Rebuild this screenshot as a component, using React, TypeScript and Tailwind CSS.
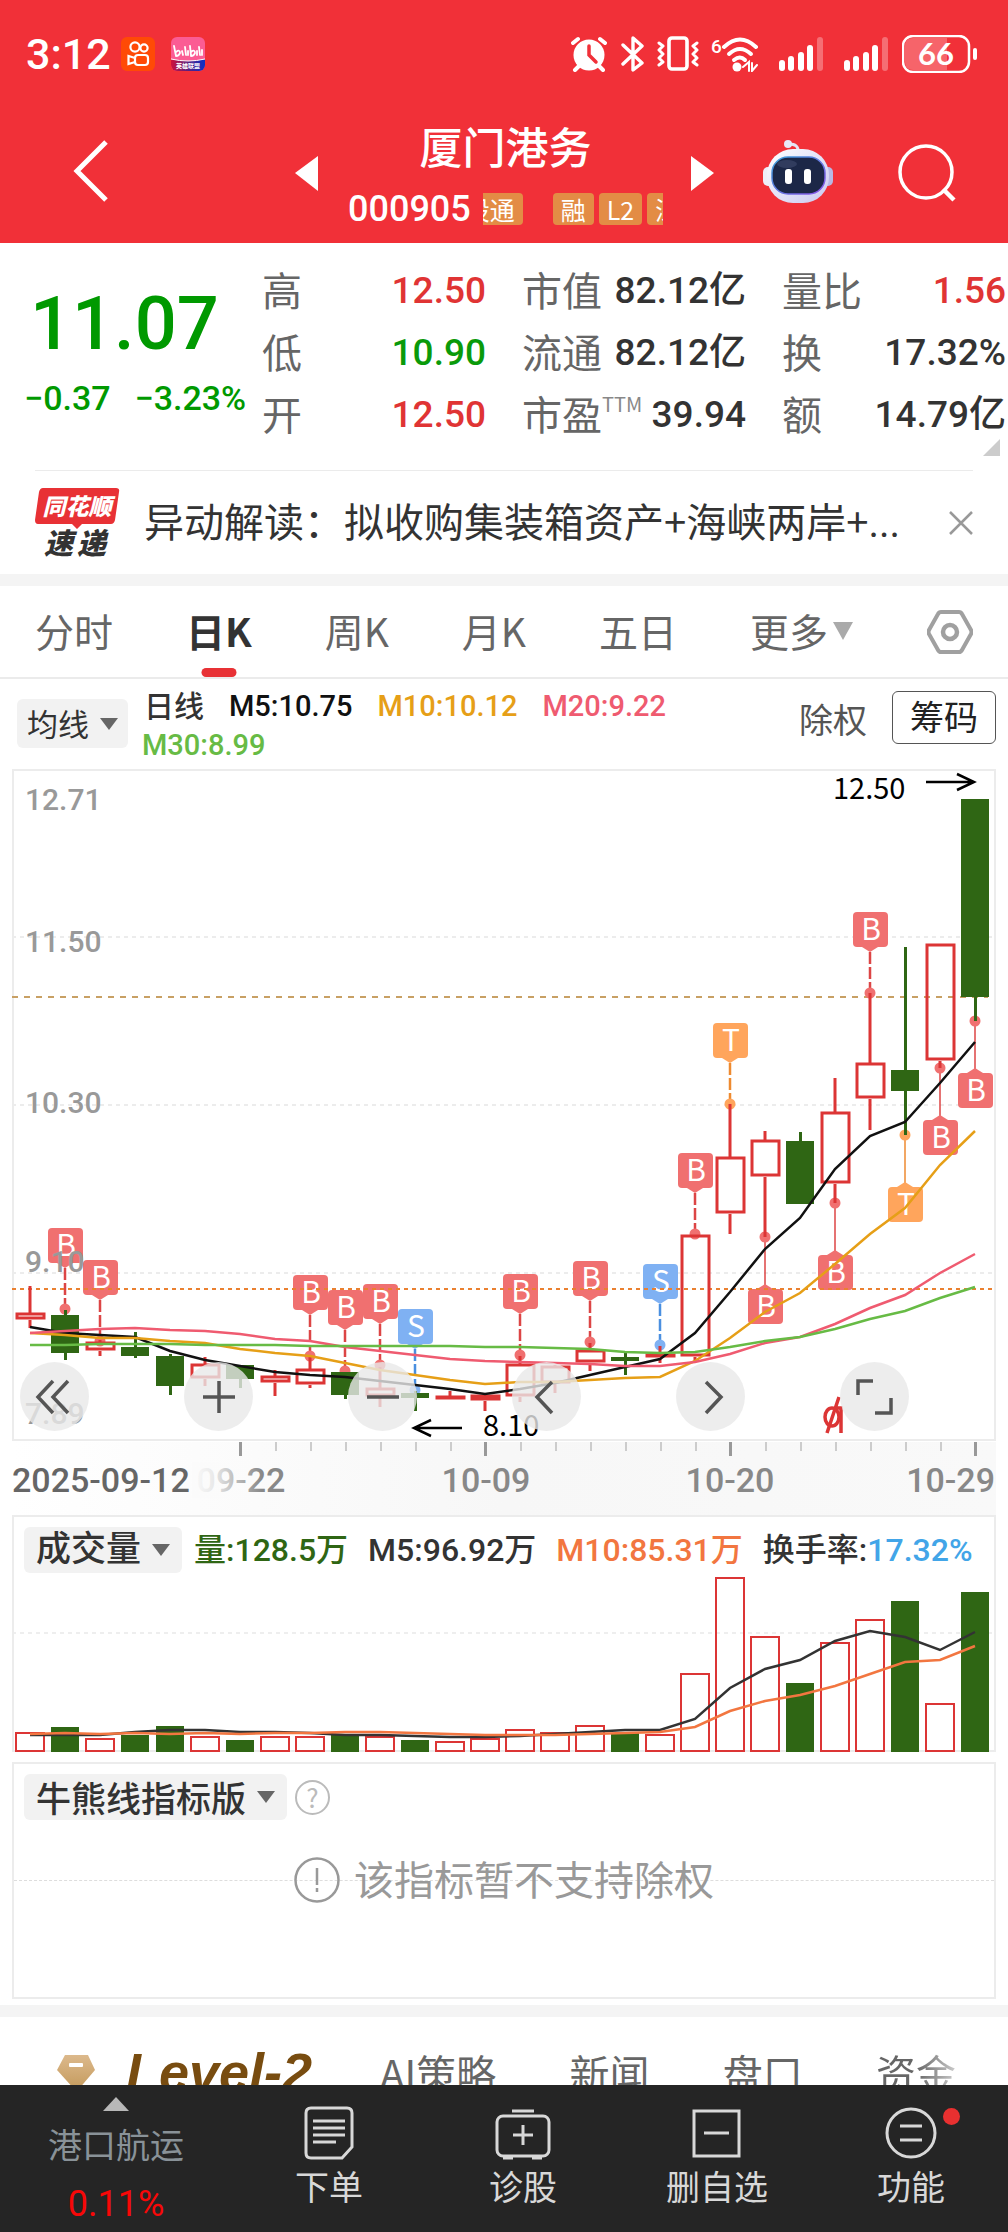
import React, { useState } from 'react';

type Candle = [color: 'r' | 'g', high: number, top: number, bottom: number, low: number];

interface Marker {
  at: number;
  y: number;
  kind: 'B' | 'S' | 'T';
  below?: boolean;
}

const STEP = 35;
const FIRST_X = 18;
const RED = '#dc3535';
const GREEN = '#2f6614';

const candles: Candle[] = [
  ['r', 517, 544, 551, 559],
  ['g', 541, 546, 584, 591],
  ['r', 571, 573, 582, 587],
  ['g', 563, 578, 587, 589],
  ['g', 585, 587, 617, 626],
  ['r', 588, 595, 610, 617],
  ['g', 596, 596, 610, 619],
  ['r', 601, 607, 614, 627],
  ['r', 588, 600, 616, 619],
  ['g', 603, 603, 626, 630],
  ['r', 598, 619, 628, 638],
  ['g', 622, 624, 629, 642],
  ['r', 622, 627, 631, 631],
  ['r', 624, 626, 632, 642],
  ['r', 587, 595, 628, 633],
  ['r', 596, 597, 615, 624],
  ['r', 574, 581, 594, 602],
  ['g', 584, 588, 592, 606],
  ['r', 577, 585, 589, 594],
  ['r', 466, 466, 588, 592],
  ['r', 335, 388, 445, 465],
  ['r', 362, 371, 408, 468],
  ['g', 363, 372, 435, 435],
  ['r', 309, 343, 415, 434],
  ['r', 224, 294, 330, 361],
  ['g', 178, 301, 322, 366],
  ['r', 175, 175, 292, 299],
  ['g', 30, 30, 228, 252],
];

const priceLines = [
  { color: '#111111', ys: [558, 564, 566, 568, 582, 591, 597, 603, 606, 608, 612, 616, 620, 625, 620, 614, 606, 598, 590, 564, 523, 480, 449, 400, 367, 353, 314, 273] },
  { color: '#e69f17', ys: [564, 566, 569, 569, 572, 574, 580, 584, 587, 594, 601, 606, 611, 615, 613, 613, 611, 609, 608, 592, 569, 543, 524, 495, 465, 439, 396, 362] },
  { color: '#ef5b70', ys: [564, 562, 560, 559, 561, 562, 565, 570, 572, 578, 582, 586, 590, 592, 593, 594, 595, 597, 597, 593, 585, 574, 568, 555, 539, 526, 504, 485] },
  { color: '#67bb45', ys: [576, 576, 575, 575, 575, 576, 576, 576, 577, 577, 577, 577, 577, 578, 578, 579, 580, 583, 584, 583, 578, 572, 568, 560, 550, 542, 529, 518] },
];

const markers: Marker[] = [
  { at: 1, y: 540, kind: 'B' },
  { at: 2, y: 572, kind: 'B' },
  { at: 8, y: 587, kind: 'B' },
  { at: 9, y: 602, kind: 'B' },
  { at: 10, y: 596, kind: 'B' },
  { at: 11, y: 621, kind: 'S' },
  { at: 14, y: 586, kind: 'B' },
  { at: 16, y: 573, kind: 'B' },
  { at: 18, y: 576, kind: 'S' },
  { at: 19, y: 465, kind: 'B' },
  { at: 20, y: 335, kind: 'T' },
  { at: 24, y: 224, kind: 'B' },
  { at: 21, y: 468, kind: 'B', below: true },
  { at: 23, y: 434, kind: 'B', below: true },
  { at: 25, y: 366, kind: 'T', below: true },
  { at: 26, y: 299, kind: 'B', below: true },
  { at: 27, y: 252, kind: 'B', below: true },
];

const markerColors = {
  B: { box: '#f07070', line: '#dc4545' },
  S: { box: '#7fb1f3', line: '#4a8fe0' },
  T: { box: '#ffa55c', line: '#ee8a30' },
};

const volumeTops = [157, 152, 163, 160, 151, 161, 165, 161, 161, 160, 161, 165, 166, 163, 154, 157, 150, 158, 159, 98, 2, 61, 108, 67, 44, 26, 128, 17];

const volumeLines = [
  { color: '#333333', ys: [160, 160, 160, 157, 155, 155, 157, 157, 158, 160, 160, 161, 162, 162, 161, 159, 157, 155, 155, 144, 113, 94, 85, 66, 56, 62, 75, 57] },
  { color: '#f27640', ys: [159, 158, 159, 158, 159, 158, 159, 158, 158, 157, 157, 158, 159, 160, 160, 160, 159, 158, 157, 152, 136, 126, 120, 111, 99, 87, 85, 71] },
];

const tabs = ['分时', '日K', '周K', '月K', '五日'];

const quoteColumns = [
  [
    { label: '高', value: '12.50', color: 'text-[#e03434]' },
    { label: '低', value: '10.90', color: 'text-[#0a9a0a]' },
    { label: '开', value: '12.50', color: 'text-[#e03434]' },
  ],
  [
    { label: '市值', value: '82.12亿', color: 'text-[#333333]' },
    { label: '流通', value: '82.12亿', color: 'text-[#333333]' },
    { label: '市盈', sup: 'TTM', value: '39.94', color: 'text-[#333333]' },
  ],
  [
    { label: '量比', value: '1.56', color: 'text-[#e03434]' },
    { label: '换', value: '17.32%', color: 'text-[#333333]' },
    { label: '额', value: '14.79亿', color: 'text-[#333333]' },
  ],
];

const NUM = "font-[Roboto,'Noto_Sans_CJK_SC',sans-serif]";

const xOf = (i: number) => FIRST_X + i * STEP;
const toPoints = (ys: number[]) => ys.map((y, i) => `${xOf(i)},${y}`).join(' ');

function SignalIcon() {
  return (
    <svg className="h-9 w-11" viewBox="0 0 44 36" fill="#fff">
      <rect x="0" y="24" width="6" height="11" rx="3" />
      <rect x="9" y="20" width="6" height="15" rx="3" />
      <rect x="19" y="16" width="6" height="19" rx="3" />
      <rect x="28" y="9" width="6" height="26" rx="3" />
      <rect x="38" y="1" width="6" height="34" rx="3" opacity="0.3" />
    </svg>
  );
}

function StatusBar() {
  return (
    <div className="flex h-[108px] items-center pl-[26px] pr-[30px] text-white">
      <span className="font-[Roboto,sans-serif] text-[43px] leading-none font-medium">3:12</span>
      <svg className="ml-[10px] size-[34px]" viewBox="0 0 34 34">
        <rect width="34" height="34" rx="6" fill="#ff4a06" />
        <g fill="none" stroke="#fff" strokeWidth="2.2">
          <circle cx="14" cy="10" r="4.6" />
          <circle cx="23" cy="11" r="3.6" />
          <rect x="14" y="18" width="13" height="10" rx="3" />
          <path d="M14 21 L7.500 19 V27 L14 25" />
        </g>
      </svg>
      <svg className="ml-4 size-[34px]" viewBox="0 0 34 34">
        <defs>
          <clipPath id="bili">
            <rect width="34" height="34" rx="6" />
          </clipPath>
          <linearGradient id="biliStrip" x1="0" x2="1">
            <stop offset="0" stopColor="#d0103a" />
            <stop offset="0.5" stopColor="#5a2080" />
            <stop offset="1" stopColor="#0a30c8" />
          </linearGradient>
        </defs>
        <g clipPath="url(#bili)">
          <rect width="34" height="34" fill="#fb5c94" />
          <path d="M0 22 Q17 26 34 22 V34 H0 Z" fill="url(#biliStrip)" />
          <path d="M0 22 Q17 26 34 22" fill="none" stroke="#fff" />
        </g>
        <g fill="none" stroke="#fff" strokeWidth="1.800" strokeLinecap="round">
          <path d="M3 9 L5 19 M5 15 Q9 12 9 16 Q8 19 5 19 M11 14 L12 18 M14 10 L15 18 M17 14 L17 18" />
          <path d="M19 9 L20 19 M20 15 Q24 12 24 16 Q23 19 20 19 M26 14 L26 18 M28 10 L29 18 M31 13 L31 18" />
        </g>
        <text x="17" y="31" textAnchor="middle" fontSize="6" fontWeight="700" fill="#fff">英雄联盟</text>
      </svg>

      <div className="ml-auto flex items-center">
        <svg className="h-9 w-9" viewBox="0 0 36 36">
          <circle cx="18" cy="19" r="15.500" fill="#fff" />
          <g stroke="#fff" strokeWidth="4" strokeLinecap="round">
            <path d="M2 7 L7 3 M34 7 L29 3 M8 30 L4 34 M28 30 L32 34" />
          </g>
          <path d="M18 10 V19 L25 26" fill="none" stroke="#f13038" strokeWidth="3.500" strokeLinecap="round" />
        </svg>
        <svg className="ml-[14px] h-9 w-6" viewBox="0 0 24 36" fill="none" stroke="#fff" strokeWidth="3.400" strokeLinejoin="round" strokeLinecap="round">
          <path d="M2 9 L21 27 L12 34 V2 L21 10 L2 28" />
        </svg>
        <svg className="ml-3 h-9 w-[42px]" viewBox="0 0 42 36" fill="none" stroke="#fff" strokeWidth="3.600" strokeLinejoin="round" strokeLinecap="round">
          <rect x="12" y="2" width="18" height="31" rx="3" />
          <path d="M2 7 L6 10 L2 14 L6 18 L2 22 L6 26 L2 29 M40 7 L36 10 L40 14 L36 18 L40 22 L36 26 L40 29" strokeWidth="3" />
        </svg>
        <svg className="ml-3 h-9 w-12" viewBox="0 0 48 36" fill="none" stroke="#fff" strokeWidth="4" strokeLinecap="round">
          <text x="0" y="17" fontSize="19" fontFamily="Roboto" fontWeight="500" fill="#fff" stroke="none">6</text>
          <path d="M13 11 Q29 -4 45 11" />
          <path d="M18 18 Q29 8 40 18" />
          <path d="M23 24 Q29 19 34 24" />
          <circle cx="26" cy="31" r="4.500" fill="#fff" stroke="none" />
          <path d="M32 31 L38 26 V35 M41 27 V35 L46 29" strokeWidth="2" />
        </svg>
        <span className="ml-5"><SignalIcon /></span>
        <span className="ml-[21px]"><SignalIcon /></span>
        <svg className="ml-[14px] h-[38px] w-[76px]" viewBox="0 0 76 38">
          <rect x="1" y="1" width="66" height="36" rx="10" fill="#f13038" stroke="#fff" strokeWidth="2.500" />
          <path d="M11 3 H45 V35 H11 Q3 35 3 27 V11 Q3 3 11 3 Z" fill="#f6646a" />
          <rect x="71" y="13" width="4" height="12" rx="2" fill="#fff" />
          <text x="34" y="30" textAnchor="middle" fontSize="31" fontWeight="700" fill="#fff" className="font-[Lato,sans-serif]">66</text>
        </svg>
      </div>
    </div>
  );
}

function RobotIcon() {
  return (
    <svg className="h-16 w-[70px]" viewBox="0 0 70 64">
      <defs>
        <linearGradient id="shell" x1="0" y1="0" x2="1" y2="1">
          <stop offset="0" stopColor="#ffffff" />
          <stop offset="1" stopColor="#c9c8f0" />
        </linearGradient>
        <linearGradient id="rim" x1="0" y1="0" x2="1" y2="1">
          <stop offset="0" stopColor="#3aa0d8" />
          <stop offset="1" stopColor="#8a50e8" />
        </linearGradient>
      </defs>
      <path d="M26 4 Q36 4 35 12" fill="none" stroke="#e4e4f4" strokeWidth="3" />
      <circle cx="25" cy="4" r="4" fill="#e8e8f8" />
      <rect x="0" y="27" width="12" height="19" rx="5" fill="#eeeef8" />
      <rect x="58" y="27" width="12" height="19" rx="5" fill="#b8b8e4" />
      <rect x="4" y="9" width="62" height="54" rx="26" fill="url(#shell)" />
      <rect x="9" y="17" width="53" height="37" rx="16" fill="#1c2747" stroke="url(#rim)" strokeWidth="1.500" />
      <ellipse cx="24" cy="24" rx="10" ry="4" fill="#3b4668" opacity="0.7" />
      <rect x="22" y="29" width="7" height="15" rx="3" fill="#fff" />
      <rect x="41" y="29" width="7" height="15" rx="3" fill="#fff" />
    </svg>
  );
}

function TitleBar() {
  return (
    <div className="flex h-[135px] items-start pl-[72px] pr-[52px] text-white">
      <button type="button" aria-label="返回" className="mt-8">
        <svg className="h-[62px] w-9" viewBox="0 0 36 62" fill="none" stroke="#fff" strokeWidth="5">
          <path d="M34 2 L5 31 L34 60" />
        </svg>
      </button>
      <button type="button" aria-label="上一只" className="mt-12 ml-auto">
        <svg className="h-9 w-6" viewBox="0 0 24 36" fill="#fff"><path d="M24 0 V35 L1 17 Z" /></svg>
      </button>
      <div className="mt-[13px] ml-[30px] flex w-[315px] flex-col items-center">
        <h1 className="text-[43px] leading-[48px] font-medium">厦门港务</h1>
        <div className="mt-6 flex w-full items-center">
          <span className={`${NUM} text-[36px] leading-8 font-medium`}>000905</span>
          <div className="ml-3 flex flex-1 items-center gap-[5px] overflow-hidden text-[25px] leading-8">
            <span className="mr-[25px] flex w-10 shrink-0 justify-end overflow-hidden rounded-r-sm bg-[#e38c45] pr-2">
              <span className="shrink-0">股通</span>
            </span>
            <span className="shrink-0 rounded-sm bg-[#e38c45] px-2">融</span>
            <span className="shrink-0 rounded-sm bg-[#e38c45] px-2">L2</span>
            <span className="shrink-0 rounded-sm bg-[#e38c45] px-2">深</span>
          </div>
        </div>
      </div>
      <button type="button" aria-label="下一只" className="mt-12 ml-7">
        <svg className="h-9 w-6" viewBox="0 0 24 36" fill="#fff"><path d="M0 0 V35 L23 17 Z" /></svg>
      </button>
      <button type="button" aria-label="智能助手" className="mt-8 ml-12">
        <RobotIcon />
      </button>
      <button type="button" aria-label="搜索" className="mt-9 ml-[65px]">
        <svg className="size-[58px]" viewBox="0 0 58 58" fill="none" stroke="#fff" strokeWidth="3.500">
          <circle cx="28" cy="28" r="26" />
          <path d="M45 45 L56 56" strokeWidth="4.500" />
        </svg>
      </button>
    </div>
  );
}

function QuotePanel() {
  return (
    <section className="relative flex h-[227px] pt-[17px]">
      <div className={`${NUM} w-[262px] pl-6 font-medium whitespace-nowrap text-[#009900]`}>
        <div className="pt-5 pl-[6px] text-[74px] leading-[88px]">11.07</div>
        <div className="mt-2 flex gap-6 text-[34px] leading-[44px]">
          <span>−0.37</span>
          <span>−3.23%</span>
        </div>
      </div>
      <div className="grid flex-1 grid-cols-3 gap-x-9 pr-[2px]">
        {quoteColumns.map((column, c) => (
          <dl key={c}>
            {column.map(row => (
              <div key={row.label} className="flex h-[62px] items-center justify-between whitespace-nowrap">
                <dt className="flex pb-[5px] text-[40px] leading-[58px] text-[#666666]">
                  {row.label}
                  {row.sup && <sup className="top-0 pt-2 text-[20px] leading-6 text-[#888888]">{row.sup}</sup>}
                </dt>
                <dd className={`${NUM} ${row.color} text-[37px] leading-[62px] font-medium`}>{row.value}</dd>
              </div>
            ))}
          </dl>
        ))}
      </div>
      <svg className="absolute right-2 bottom-[14px] size-[17px]" viewBox="0 0 17 17">
        <path d="M17 0 V17 H0 Z" fill="#cccccc" />
      </svg>
    </section>
  );
}

function NewsBar() {
  return (
    <section className="mx-[35px] flex h-[104px] items-center border-t border-[#ebebeb]">
      <svg className="h-[70px] w-[85px] shrink-0" viewBox="0 0 85 70">
        <path d="M8 0 H81 Q85 0 84 4 L80 32 Q79 36 76 36 H47 L42 41 L37 36 H3 Q0 36 0 32 L4 4 Q5 0 8 0 Z" fill="#e83135" />
        <g fontWeight="900" fontStyle="italic">
          <text x="42" y="27" textAnchor="middle" fontSize="23" fill="#fff">同花顺</text>
          <text x="9" y="66" fontSize="29" fill="#333">速</text>
          <text x="42" y="66" fontSize="29" fill="#333">递</text>
        </g>
      </svg>
      <a href="#news" className="ml-6 flex-1 pb-[2px] text-[40px] leading-[60px] whitespace-nowrap text-[#333333]">
        异动解读：拟收购集装箱资产+海峡两岸+<span className="font-[Roboto,sans-serif]">...</span>
      </a>
      <button type="button" aria-label="关闭">
        <svg className="size-6" viewBox="0 0 24 24" stroke="#999" strokeWidth="2.500"><path d="M1 1 L23 23 M23 1 L1 23" /></svg>
      </button>
    </section>
  );
}

function PeriodTabs() {
  const [active, setActive] = useState('日K');

  return (
    <nav className="flex h-[93px] items-center justify-between border-b-2 border-[#ebebeb] px-[35px] text-[39px] text-[#666666]">
      {tabs.map(tab => (
        <button
          key={tab}
          type="button"
          onClick={() => setActive(tab)}
          className={`relative h-full pb-[2px] ${tab === active ? 'font-bold text-[#333333]' : ''}`}
        >
          {tab}
          {tab === active && <span className="absolute bottom-0 left-1/2 h-[9px] w-[35px] -translate-x-1/2 rounded-full bg-[#e83135]" />}
        </button>
      ))}
      <button type="button" className="flex items-center gap-1 pb-[2px]">
        更多
        <svg className="h-[18px] w-[22px]" viewBox="0 0 22 18"><path d="M1 0 H21 L11 18 Z" fill="#aaa" /></svg>
      </button>
      <button type="button" aria-label="设置">
        <svg className="h-11 w-[46px]" viewBox="0 0 46 44" fill="none" stroke="#a0a0a0" strokeWidth="4" strokeLinejoin="round">
          <path d="M14 2 H32 Q34 2 35 4 L44 20 Q45 22 44 24 L35 40 Q34 42 32 42 H14 Q12 42 11 40 L2 24 Q1 22 2 20 L11 4 Q12 2 14 2 Z" />
          <circle cx="23" cy="22" r="7" strokeWidth="4.500" />
        </svg>
      </button>
    </nav>
  );
}

function CaretDown() {
  return (
    <svg className="h-3 w-[18px]" viewBox="0 0 18 12"><path d="M0 0 H18 L9 12 Z" fill="#666" /></svg>
  );
}

function AverageBar() {
  return (
    <div className="flex h-[90px] items-start pl-[17px] pr-3">
      <button type="button" className="mt-5 flex h-[49px] w-[111px] shrink-0 items-center justify-center gap-[11px] rounded-md bg-[#f2f2f2] text-[31px] text-[#333333]">
        均线
        <CaretDown />
      </button>
      <div className={`${NUM} mt-2 ml-[14px] flex flex-1 flex-wrap gap-x-[25px] text-[29px] leading-[39px] font-medium`}>
        <span className="pl-[2px] text-[30px] text-[#333333]">日线</span>
        <span className="text-[#111111]">M5:10.75</span>
        <span className="text-[#e69f17]">M10:10.12</span>
        <span className="text-[#ef5b70]">M20:9.22</span>
        <span className="text-[#67bb45]">M30:8.99</span>
      </div>
      <button type="button" className="mt-4 text-[34px] leading-[48px] text-[#555555]">除权</button>
      <button type="button" className="mt-3 ml-[25px] h-[53px] w-[104px] rounded-md border border-[#555555] pb-1 text-[34px] leading-[46px] text-[#222222]">筹码</button>
    </div>
  );
}

function MarkerShape({ at, y, kind, below }: Marker) {
  const x = xOf(at);
  const { box, line } = markerColors[kind];
  const boxTop = below ? y + 52 : y - 81;

  return (
    <g>
      {below ? (
        <path d={`M${x} ${y} V${boxTop - 3}`} stroke={line} strokeWidth="1.500" />
      ) : (
        <path d={`M${x} ${boxTop + 40} V${y}`} stroke={line} strokeWidth="2.500" strokeDasharray="12 3" />
      )}
      <circle cx={x} cy={y} r="5.500" fill={box} />
      <rect x={x - 17} y={boxTop} width="35" height="35" rx="4" fill={box} />
      {below ? (
        <path d={`M${x - 8} ${boxTop} L${x} ${boxTop - 5} L${x + 8} ${boxTop} Z`} fill={box} />
      ) : (
        <path d={`M${x - 8} ${boxTop + 35} L${x} ${boxTop + 40} L${x + 8} ${boxTop + 35} Z`} fill={box} />
      )}
      <text x={x + 1} y={boxTop + 28} textAnchor="middle" fontSize="30" fill="#fff">{kind}</text>
    </g>
  );
}

const roundButtons = [
  { label: '最左', d: 'M33 19 L18 35 L33 51 M48 19 L33 35 L48 51' },
  { label: '放大', d: 'M19 35 H51 M35 19 V51' },
  { label: '缩小', d: 'M19 35 H51' },
  { label: '左移', d: 'M40 20 L25 35 L40 51' },
  { label: '右移', d: 'M30 20 L45 35 L30 51' },
  { label: '全屏', d: 'M18 33 V19 H33 M51 36 V51 H35' },
];

function PriceChart() {
  return (
    <div className="relative mx-3">
      <svg className="block w-full" viewBox="0 0 984 673">
        <rect x="1" y="1" width="982" height="670" fill="none" stroke="#ececec" strokeWidth="2" />
        <g stroke="#ececec" strokeWidth="2" strokeDasharray="4 4">
          <path d="M0 168 H980 M0 336 H980 M0 504 H980" />
        </g>
        <path d="M0 228 H976" stroke="#c8a064" strokeWidth="2" strokeDasharray="6 6" />

        {markers.map(m => <MarkerShape key={m.at} {...m} />)}

        <path d="M0 520 H980" stroke="#ea8030" strokeWidth="2" strokeDasharray="4 4" />

        {candles.map(([color, high, top, bottom, low], i) => {
          const x = xOf(i);
          return color === 'g' ? (
            <g key={i} fill={GREEN}>
              <rect x={x - 1} y={high} width="3" height={low - high} />
              <rect x={x - 14} y={top} width="28" height={Math.max(bottom - top, 3)} />
            </g>
          ) : (
            <g key={i} fill="none" stroke={RED} strokeWidth="3">
              <path d={`M${x} ${high} V${top} M${x} ${bottom} V${low}`} />
              <rect x={x - 13} y={top + 1} width="27" height={Math.max(bottom - top - 3, 1)} />
            </g>
          );
        })}

        {priceLines.map(line => (
          <polyline key={line.color} points={toPoints(line.ys)} fill="none" stroke={line.color} strokeWidth="2.500" />
        ))}

        <g className={NUM} fontSize="30" fontWeight="500" fill="#999">
          <text x="13" y="41">12.71</text>
          <text x="13" y="183">11.50</text>
          <text x="13" y="344">10.30</text>
          <text x="13" y="503">9.10</text>
          <text x="13" y="655">7.89</text>
        </g>
        <g fontSize="29" fill="#000">
          <text x="821" y="30">12.50</text>
          <text x="471" y="667">8.10</text>
        </g>
        <g fill="none" stroke="#000" strokeWidth="2.500">
          <path d="M914 13 H962 M945 5 L962 13 L945 21" />
          <path d="M450 659 H402 M419 651 L402 659 L419 667" />
        </g>
        <g fill="none" stroke={RED} strokeWidth="3.500">
          <ellipse cx="820" cy="648" rx="7" ry="9" />
          <path d="M823 639 H829 V664 M827 628 L815 664" />
        </g>
      </svg>
      <div className="absolute inset-x-0 bottom-[11px] flex justify-between pr-[87px] pl-2">
        {roundButtons.map(b => (
          <button key={b.label} type="button" aria-label={b.label} className="size-[69px] rounded-full bg-[#e8e8e8]/80">
            <svg className="size-full" viewBox="0 0 69 69" fill="none" stroke="#555" strokeWidth="3.500"><path d={b.d} /></svg>
          </button>
        ))}
      </div>
    </div>
  );
}

function DateAxis() {
  const ticks = Array.from({ length: 22 }, (_, k) => k + 6);

  return (
    <div className="mx-3 bg-linear-to-r from-white via-[#f7f7f7] to-[#f9f9f9]">
      <svg className="block w-full" viewBox="0 0 984 73">
        <defs>
          <linearGradient id="axisFade" x1="0" x2="1">
            <stop offset="0" stopColor="#fbfbfb" />
            <stop offset="0.3" stopColor="#fbfbfb" stopOpacity="0.85" />
            <stop offset="1" stopColor="#fbfbfb" stopOpacity="0" />
          </linearGradient>
        </defs>
        {ticks.map(i => (
          i % 7 === 6
            ? <rect key={i} x={xOf(i) - 1} y="0" width="3" height="14" fill="#999" />
            : <rect key={i} x={xOf(i)} y="0" width="2" height="9" fill="#ccc" />
        ))}
        <g className={NUM} fontSize="34" fontWeight="500" fill="#888">
          <text x="229" y="50" textAnchor="middle">09-22</text>
          <rect x="180" y="20" width="70" height="36" fill="url(#axisFade)" />
          <text x="474" y="50" textAnchor="middle">10-09</text>
          <text x="718" y="50" textAnchor="middle">10-20</text>
          <text x="983" y="50" textAnchor="end">10-29</text>
          <text x="0" y="50" fill="#666">2025-09-12</text>
        </g>
      </svg>
    </div>
  );
}

function VolumePanel() {
  return (
    <section className="mx-3 border-2 border-b-0 border-[#ececec]">
      <div className={`${NUM} flex items-center gap-5 pt-[10px] pb-[2px] pl-[10px] text-[32px] leading-[46px] font-medium whitespace-nowrap`}>
        <button type="button" className="-mr-2 flex h-[46px] w-[158px] shrink-0 items-center justify-center gap-[11px] rounded-md bg-[#f2f2f2] text-[35px] text-[#333333]">
          成交量
          <CaretDown />
        </button>
        <span className="text-[#2f6614]">量:128.5万</span>
        <span className="text-[#333333]">M5:96.92万</span>
        <span className="text-[#f27640]">M10:85.31万</span>
        <span className="text-[#333333]">换手率:<span className="text-[#42a5e8]">17.32%</span></span>
      </div>
      <svg className="block w-full" viewBox="2 0 980 177">
        <path d="M0 58 H980" stroke="#ddd" strokeWidth="1" strokeDasharray="4 4" />
        <path d="M0 176 H984" stroke="#ececec" strokeWidth="2" />
        {volumeTops.map((top, i) => (
          candles[i][0] === 'g'
            ? <rect key={i} x={xOf(i) - 14} y={top} width="28" height={177 - top} fill={GREEN} />
            : <rect key={i} x={xOf(i) - 14} y={top + 1} width="28" height={175 - top} fill="none" stroke={RED} strokeWidth="2" />
        ))}
        {volumeLines.map(line => (
          <polyline key={line.color} points={toPoints(line.ys)} fill="none" stroke={line.color} strokeWidth="2.500" />
        ))}
      </svg>
    </section>
  );
}

function IndicatorPanel() {
  return (
    <section className="mx-3 mt-[10px] h-[237px] border-2 border-[#ececec] pt-[10px] pl-[10px]">
      <div className="flex items-center gap-2">
        <button type="button" className="flex h-[46px] w-[263px] items-center justify-center gap-[11px] rounded-md bg-[#f2f2f2] text-[35px] font-medium text-[#333333]">
          牛熊线指标版
          <CaretDown />
        </button>
        <button type="button" aria-label="说明" className="size-[35px] rounded-full border-2 border-[#bbbbbb] text-[26px] leading-[30px] text-[#bbbbbb]">?</button>
      </div>
      <div className="relative mt-[30px] -ml-[10px] flex h-[60px] items-center justify-center">
        <div className="absolute inset-x-0 top-1/2 border-t border-dashed border-[#dddddd]" />
        <svg className="relative size-[46px]" viewBox="0 0 46 46" fill="none" stroke="#999" strokeWidth="2.500">
          <circle cx="23" cy="23" r="21.500" />
          <path d="M23 11 V28 M23 31 V35" />
        </svg>
        <p className="relative ml-[14px] pb-1 text-[40px] leading-[56px] text-[#999999]">该指标暂不支持除权</p>
      </div>
    </section>
  );
}

function FeatureTabs() {
  return (
    <nav className="flex h-[100px] items-start pt-[25px] pr-[52px] pl-14 text-[40px] leading-[60px] whitespace-nowrap text-[#666666]">
      <a href="#level2" className="flex items-center text-[#784c10]">
        <svg className="h-[38px] w-10" viewBox="0 0 40 38">
          <defs>
            <linearGradient id="gem" x1="0" x2="0" y1="0" y2="1">
              <stop offset="0" stopColor="#dcb98c" />
              <stop offset="1" stopColor="#c49a5c" />
            </linearGradient>
          </defs>
          <path d="M9 2 H32 L39 17 L22 37 H19 L1 17 Z" fill="url(#gem)" />
          <rect x="13" y="10" width="14" height="4" rx="1" fill="#fff" />
        </svg>
        <span className="ml-[30px] font-['Liberation_Sans',Arial,sans-serif] text-[54px] font-bold italic">Level-2</span>
      </a>
      <div className="ml-[68px] flex flex-1 justify-between">
        <a href="#ai">AI策略</a>
        <a href="#stock-news">新闻</a>
        <a href="#orders">盘口</a>
        <a href="#funds" className="bg-linear-to-r from-[#666666] from-50% to-[#cccccc] bg-clip-text text-transparent">资金</a>
      </div>
    </nav>
  );
}

function BottomBar() {
  return (
    <footer className="fixed inset-x-0 bottom-0 flex h-[147px] bg-[#252525] text-[34px] leading-[44px] text-[#d8d8d8]">
      <button type="button" className="flex w-[232px] flex-col items-center pt-3 text-[#899298]">
        <svg className="h-[14px] w-[26px]" viewBox="0 0 26 14"><path d="M13 0 L26 14 H0 Z" fill="#b8b8b8" /></svg>
        <span className="mt-[11px]">港口航运</span>
        <span className={`${NUM} mt-4 text-[36px] text-[#f80808]`}>0.11%</span>
      </button>
      <div className="grid flex-1 grid-cols-4">
        <button type="button" className="flex flex-col items-center pt-[21px]">
          <svg className="size-[54px]" viewBox="0 0 54 54" fill="none" stroke="#d8d8d8" strokeWidth="3">
            <path d="M9 2 H45 Q50 2 50 7 V41 L40 52 H9 Q4 52 4 47 V7 Q4 2 9 2 Z" />
            <path d="M11 15 H43 M11 22 H43 M11 29 H43 M11 36 H34" />
          </svg>
          <span className="mt-1">下单</span>
        </button>
        <button type="button" className="flex flex-col items-center pt-[21px]">
          <svg className="h-[54px] w-[56px]" viewBox="0 0 56 54" fill="none" stroke="#d8d8d8" strokeWidth="3">
            <rect x="2" y="10" width="52" height="40" rx="6" />
            <path d="M17 5 H39 M18 29 H38 M28 19 V39" />
            <path d="M8 52 H18 M37 52 H47" />
          </svg>
          <span className="mt-1">诊股</span>
        </button>
        <button type="button" className="flex flex-col items-center pt-[21px]">
          <svg className="size-[54px]" viewBox="0 0 54 54" fill="none" stroke="#d8d8d8" strokeWidth="3">
            <rect x="4" y="5" width="45" height="45" />
            <path d="M14 27 H39" />
          </svg>
          <span className="mt-1">删自选</span>
        </button>
        <button type="button" className="relative flex flex-col items-center pt-[21px]">
          <svg className="size-[54px]" viewBox="0 0 54 54" fill="none" stroke="#d8d8d8" strokeWidth="3">
            <circle cx="27" cy="27" r="24" />
            <path d="M16 20 H38 M16 34 H38" />
          </svg>
          <span className="absolute top-[23px] right-12 size-[17px] rounded-full bg-[#e83030]" />
          <span className="mt-1">功能</span>
        </button>
      </div>
    </footer>
  );
}

export default function App() {
  return (
    <div className="bg-white font-['Noto_Sans_CJK_SC',sans-serif] text-[#333333]">
      <header className="bg-[#f13038]">
        <StatusBar />
        <TitleBar />
      </header>
      <QuotePanel />
      <NewsBar />
      <div className="h-3 bg-[#f4f4f4]" />
      <PeriodTabs />
      <AverageBar />
      <PriceChart />
      <DateAxis />
      <VolumePanel />
      <IndicatorPanel />
      <div className="mt-[6px] h-3 bg-[#f4f4f4]" />
      <FeatureTabs />
      <BottomBar />
    </div>
  );
}
